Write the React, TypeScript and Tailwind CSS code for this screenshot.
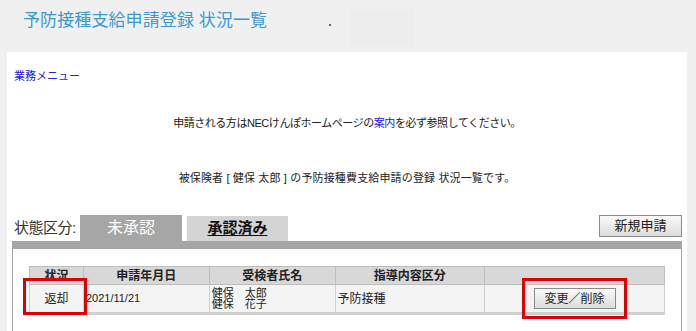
import React from 'react';

const font = "font-['Liberation_Sans','Noto_Sans_CJK_JP',sans-serif]";

export default function App() {
  return (
    <div className={`w-[696px] h-[331px] bg-[#f0f0f0] overflow-hidden flex flex-col ${font}`}>
      {/* page title */}
      <div className="h-[52px] shrink-0 flex items-start pl-[23px] pt-[9px]">
        <h1 className="text-[17px] leading-[24px] text-[#3a9ad0] tracking-[0.1px]">予防接種支給申請登録 状況一覧</h1>
        <span className="ml-[62px] mt-[15px] w-[2px] h-[2px] bg-[#666]" />
        <div className="ml-[18px] w-[64px] h-[38px] bg-[#ededed]" />
      </div>

      <div className="flex flex-1 min-h-0">
        <div className="w-[7px] shrink-0" />
        <div className="w-[680px] bg-white flex flex-col">
          <a className="mt-[16px] ml-[7px] text-[11px] leading-[16px] text-[#2020e0] w-fit">業務メニュー</a>

          <p className="mt-[31px] text-center text-[11px] leading-[16px] text-[#222] tracking-[-0.45px]">
            申請される方はNECけんぽホームページの<a className="text-[#2020e0]">案内</a>を必ず参照してください。
          </p>

          <p className="mt-[39px] text-center text-[11px] leading-[16px] text-[#222] tracking-[0.15px]">
            被保険者 [ 健保 太郎 ] の予防接種費支給申請の登録 状況一覧です。
          </p>

          {/* tabs row */}
          <div className="mt-[29px] flex items-end pl-[7px] pr-[5px] h-[26px]">
            <span className="text-[15px] leading-[20px] text-[#333] mb-[3px] w-[66px] whitespace-nowrap tracking-[-0.5px]">状態区分:</span>
            <div className="w-[102px] h-[26px] bg-[#a6a6a6] flex items-center justify-center text-white text-[16px]">
              未承認
            </div>
            <div className="ml-[5px] w-[101px] h-[25px] bg-[#d4d4d4] flex items-center justify-center text-[15px] font-semibold underline underline-offset-2 text-[#111]">
              承認済み
            </div>
            <button className="ml-auto self-start w-[83px] h-[22px] border border-[#8a8a8a] bg-gradient-to-b from-[#fafafa] to-[#dcdcdc] text-[13px] leading-[18px] text-[#222]">
              新規申請
            </button>
          </div>

          {/* list box */}
          <div className="ml-[5px] w-[670px] flex-1 flex flex-col">
            <div className="h-[8px] bg-[#a6a6a6]" />
            <div className="flex-1 border-x border-[#a6a6a6] bg-white pl-[16px] pt-[17px]">
              <div className="relative w-[636px]">
                <table className="w-[636px] border-collapse text-[12px] text-[#222] shadow-[0_2px_0_#cfcfcf]">
                  <thead>
                    <tr className="h-[18px] bg-[#d8d8d8] font-bold">
                      <th className="w-[54px] border border-[#bdbdbd] leading-[16px]">状況</th>
                      <th className="w-[126px] border border-[#bdbdbd] leading-[16px]">申請年月日</th>
                      <th className="w-[126px] border border-[#bdbdbd] leading-[16px]">受検者氏名</th>
                      <th className="w-[150px] border border-[#bdbdbd] leading-[16px]">指導内容区分</th>
                      <th className="w-[180px] border border-[#bdbdbd]"></th>
                    </tr>
                  </thead>
                  <tbody>
                    <tr className="h-[28px] bg-[#f4f4f4]">
                      <td className="border border-[#cfcfcf] text-center">返却</td>
                      <td className="border border-[#cfcfcf] pl-[2px] text-[11px]">2021/11/21</td>
                      <td className="border border-[#cfcfcf] pl-[2px] text-[11px] leading-[11px]">
                        <div>健保　太郎</div>
                        <div>健保　花子</div>
                      </td>
                      <td className="border border-[#cfcfcf] pl-[2px]">予防接種</td>
                      <td className="border border-[#cfcfcf] text-center">
                        <button className="w-[82px] h-[21px] border border-[#8a8a8a] bg-gradient-to-b from-[#fafafa] to-[#dcdcdc] text-[12px] leading-[18px] text-[#222]">
                          変更／削除
                        </button>
                      </td>
                    </tr>
                  </tbody>
                </table>
                {/* annotation boxes */}
                <div className="absolute left-[-6px] top-[12px] w-[64px] h-[37px] border-[3px] border-[#e00000]" />
                <div className="absolute left-[493px] top-[12px] w-[105px] h-[41px] border-[3px] border-[#e00000]" />
              </div>
            </div>
          </div>
        </div>
      </div>
    </div>
  );
}
